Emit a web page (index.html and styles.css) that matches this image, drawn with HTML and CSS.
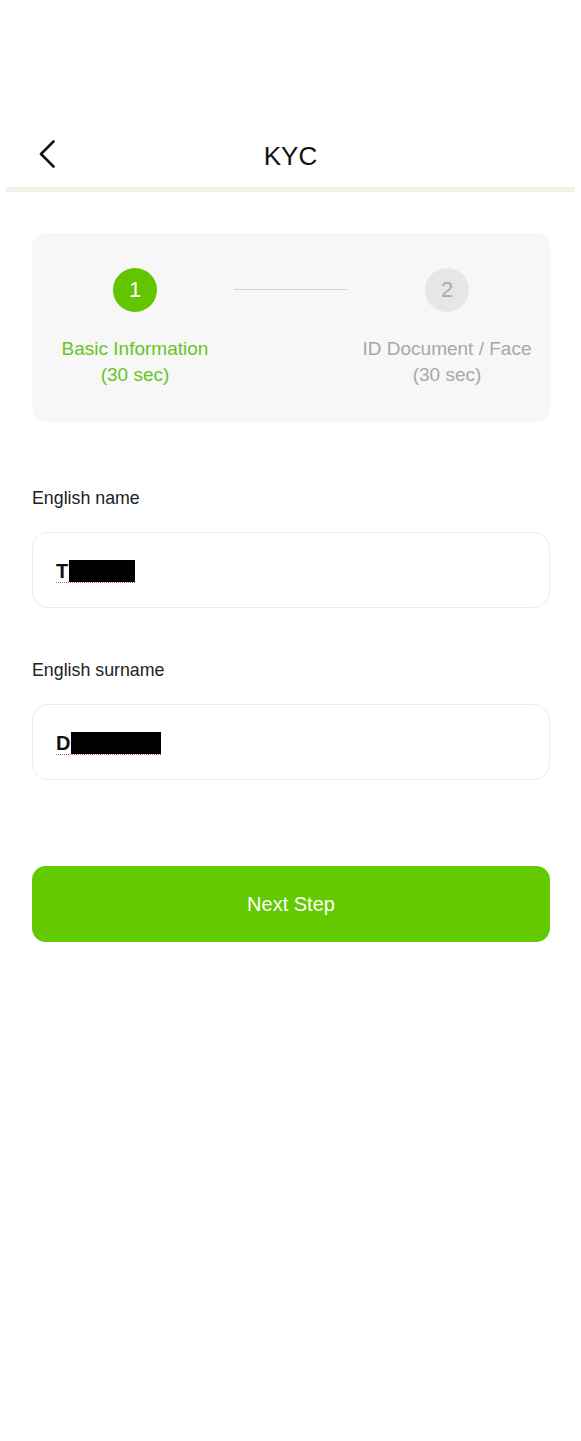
FILE: index.html
```html
<!DOCTYPE html>
<html lang="en">
<head>
<meta charset="utf-8">
<title>KYC</title>
<link rel="stylesheet" href="styles.css">
</head>
<body>
<div class="page">
  <header class="topbar">
    <button class="back" aria-label="Back">
      <svg width="18" height="28" viewBox="0 0 18 28"><path d="M15.5 1.5 L3 14 L15.5 26.5" fill="none" stroke="#111" stroke-width="2.6" stroke-linecap="round" stroke-linejoin="round"/></svg>
    </button>
    <h1 class="title">KYC</h1>
  </header>
  <div class="divider"></div>

  <section class="steps">
    <div class="step active">
      <div class="dot">1</div>
      <div class="label">Basic Information<br>(30 sec)</div>
    </div>
    <div class="connector"></div>
    <div class="step">
      <div class="dot">2</div>
      <div class="label">ID Document / Face<br>(30 sec)</div>
    </div>
  </section>

  <form class="form">
    <label class="field-label">English name</label>
    <div class="input"><span class="value">T<span class="redact r1"></span></span></div>

    <label class="field-label">English surname</label>
    <div class="input"><span class="value">D<span class="redact r2"></span></span></div>

    <button type="button" class="next">Next Step</button>
  </form>
</div>
</body>
</html>
```

FILE: styles.css
```css
* { box-sizing: border-box; }
html, body { margin: 0; padding: 0; background: #fff; }
body { font-family: "Liberation Sans", Arial, sans-serif; color: #111; }

.page { padding-top: 126px; width: 581px; }

.topbar {
  position: relative;
  height: 60px;
  display: flex;
  align-items: center;
  justify-content: center;
}
.back {
  position: absolute;
  left: 38px;
  top: 14px;
  background: none;
  border: 0;
  padding: 0;
  width: 20px;
  height: 28px;
  display: flex;
}
.title {
  margin: 0;
  font-size: 26px;
  font-weight: normal;
  color: #111;
}
.divider {
  margin: 1px 6px 0;
  height: 5px;
  background: #eef5e8;
}

.steps {
  margin: 41px 31px 0 32px;
  height: 189px;
  background: #f7f7f7;
  border-radius: 14px;
  padding-top: 35px;
  display: grid;
  grid-template-columns: 206px minmax(0, 1fr) 206px;
}
.step {
  display: flex;
  flex-direction: column;
  align-items: center;
}
.dot {
  width: 44px;
  height: 44px;
  border-radius: 50%;
  background: #e6e6e6;
  color: #a9a9a9;
  font-size: 22px;
  display: flex;
  align-items: center;
  justify-content: center;
}
.label {
  margin-top: 24px;
  font-size: 19px;
  line-height: 26px;
  text-align: center;
  color: #a8a8a8;
  white-space: nowrap;
}
.step.active .dot { background: #62c500; color: #fff; }
.step.active .label { color: #66c51e; }
.connector {
  height: 1px;
  margin: 21px -4px 0;
  background: #d6d6d6;
}

.form {
  margin: 0 31px 0 32px;
  display: flex;
  flex-direction: column;
}
.field-label {
  font-size: 17.8px;
  line-height: 20px;
  color: #222;
  margin-top: 66px;
}
.field-label + .input { margin-top: 24px; }
.input + .field-label { margin-top: 52px; }
.input {
  height: 76px;
  border: 1px solid #ebebeb;
  border-radius: 16px;
  padding-left: 23px;
  display: flex;
  align-items: center;
}
.value {
  font-family: "Liberation Sans", Arial, sans-serif;
  font-weight: bold;
  font-size: 20px;
  color: #111;
  display: inline-flex;
  align-items: flex-end;
  border-bottom: 1px dotted #e05050;
  line-height: 22px;
  padding-top: 2px;
}
.redact {
  display: inline-block;
  background: #000;
  height: 22px;
  margin-left: 1px;
}
.r1 { width: 66px; }
.r2 { width: 90px; }

.next {
  margin-top: 86px;
  height: 76px;
  border: 0;
  border-radius: 14px;
  background: #63c900;
  color: #fff;
  font-family: "Liberation Sans", Arial, sans-serif;
  font-size: 20px;
}
```
